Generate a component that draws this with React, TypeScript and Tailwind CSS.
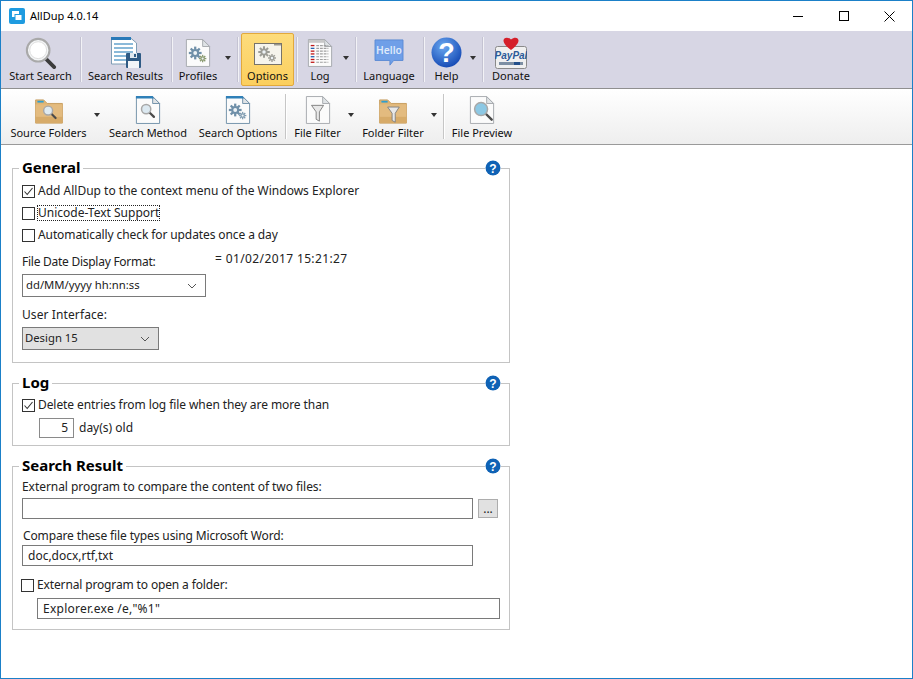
import React from "react";

const FONT = "[font-family:'Noto_Sans','DejaVu_Sans',sans-serif]";
const TXT = "text-[#222]";

function Gear({ cx, cy, r, c = "#6f8fa8" }: { cx: number; cy: number; r: number; c?: string }) {
  const teeth = Array.from({ length: 8 }, (_, i) => i * 45);
  return (
    <g>
      {teeth.map((a) => (
        <rect key={a} x={cx - r * 0.22} y={cy - r * 1.25} width={r * 0.44} height={r * 0.6} fill={c} transform={`rotate(${a} ${cx} ${cy})`} />
      ))}
      <circle cx={cx} cy={cy} r={r * 0.78} fill={c} />
      <circle cx={cx} cy={cy} r={r * 0.38} fill="#eef3f6" />
    </g>
  );
}

function Doc({ children, top }: { children?: React.ReactNode; top?: boolean }) {
  const stroke = top ? "#6d8ea6" : "#a4a8ac";
  return (
    <svg width="26" height="30" viewBox="0 0 28 32">
      <path d="M1.5 1.5H19L26.5 9V30.5H1.5Z" fill="#fbfbfb" stroke={stroke} />
      <path d="M19 1.5V9H26.5Z" fill="#dfe3e6" stroke={stroke} />
      {top && <path d="M1 1H19L20.5 3.5H1Z" fill="#2f80b8" />}
      {children}
    </svg>
  );
}

function Magnifier({ cx = 12, cy = 12, r = 6, lens = "#dfeaf0", hx = 9, sw = 2.4 }: { cx?: number; cy?: number; r?: number; lens?: string; hx?: number; sw?: number }) {
  const d = r * 0.72;
  return (
    <g>
      <line x1={cx + d} y1={cy + d} x2={cx + d + hx * 0.8} y2={cy + d + hx * 0.8} stroke="#4a4a4a" strokeWidth={sw} strokeLinecap="round" />
      <circle cx={cx} cy={cy} r={r} fill={lens} stroke="#a8a8a8" strokeWidth="1.6" />
    </g>
  );
}

function Funnel({ x = 0, y = 0 }: { x?: number; y?: number }) {
  return (
    <g transform={`translate(${x} ${y})`}>
      <path d="M0 0H13L8.5 7V17L5 15V7Z" fill="#e8e8e8" stroke="#7d7d7d" />
    </g>
  );
}

function Folder({ children }: { children?: React.ReactNode }) {
  return (
    <svg width="30" height="25" viewBox="0 0 32 28" className="mt-[4px]">
      <path d="M1 1H10L14 5H31V27H1Z" fill="#dfb473" stroke="#c59a5a" />
      <path d="M1 6H31V27H1Z" fill="#e3bb7f" />
      <path d="M1 20H31V27H1Z" fill="#d2a45f" opacity="0.7" />
      <rect x="3" y="2" width="7" height="2" fill="#2f9fd0" />
      {children}
    </svg>
  );
}

const I = {
  search: (
    <svg width="32" height="32" viewBox="0 0 34 34">
      <line x1="21" y1="22" x2="31" y2="32" stroke="#3c3c3c" strokeWidth="4" strokeLinecap="round" />
      <circle cx="14" cy="14" r="12" fill="#f4f6f7" stroke="#a9a9a9" strokeWidth="2.2" />
      <circle cx="14" cy="14" r="9" fill="#fff" stroke="#dcdcdc" />
    </svg>
  ),
  results: (
    <svg width="30" height="31" viewBox="0 0 30 31">
      <path d="M.5 .5H19L25.5 6V27H.5Z" fill="#fff" stroke="#7f9db5" />
      <rect x="0" y="0" width="20" height="3" fill="#2a7ab8" />
      {[7, 11, 15, 19, 23].map((y) => (
        <line key={y} x1="3" x2="22" y1={y} y2={y} stroke="#3b8ac0" strokeWidth="1.2" />
      ))}
      <rect x="15" y="16" width="15" height="15" rx="1" fill="#2f5b85" />
      <rect x="19" y="16" width="7" height="5" fill="#dfe8ef" />
      <rect x="23" y="17" width="2" height="3" fill="#2f5b85" />
      <rect x="17" y="24" width="11" height="7" fill="#f2f5f8" />
    </svg>
  ),
  profiles: (
    <Doc>
      <Gear cx={11} cy={16} r={5.5} />
      <Gear cx={19} cy={22} r={3.2} c="#8a9a70" />
    </Doc>
  ),
  options: (
    <svg width="28" height="22" viewBox="0 0 28 22">
      <rect x=".5" y=".5" width="27" height="21" fill="#f6f4ec" stroke="#77736a" />
      <rect x="20" y="1" width="7" height="1.5" fill="#9a988f" />
      <Gear cx={10} cy={9} r={4.6} c="#9d9d96" />
      <Gear cx={18} cy={15} r={3.2} c="#9d9d96" />
    </svg>
  ),
  log: (
    <Doc>
      <rect x="2" y="2" width="17" height="3" fill="#c8c8c8" />
      {[8, 11, 14, 17, 20, 23, 26].map((y, i) => (
        <g key={y}>
          <line x1="4" x2="8" y1={y} y2={y} stroke={i % 3 === 1 ? "#2464b0" : "#c01818"} strokeWidth="1.4" />
          <line x1="10" x2="23" y1={y} y2={y} stroke="#a0a0a0" strokeWidth="1.2" strokeDasharray="3 1" />
        </g>
      ))}
    </Doc>
  ),
  language: (
    <svg width="32" height="28" viewBox="0 0 32 30">
      <path d="M1 1H31V23H21L17 28V23H1Z" fill="#6f9fe8" stroke="#5a8ad4" />
      <text x="16" y="16" textAnchor="middle" fontSize="11" fontWeight="600" fill="#dfeafa" fontFamily="'Noto Sans',sans-serif">Hello</text>
    </svg>
  ),
  help: (
    <svg width="31" height="31" viewBox="0 0 31 31">
      <defs>
        <radialGradient id="hb" cx="0.4" cy="0.3" r="0.8">
          <stop offset="0" stopColor="#6aa8f0" />
          <stop offset="1" stopColor="#0c3fae" />
        </radialGradient>
      </defs>
      <circle cx="15.5" cy="15.5" r="15" fill="url(#hb)" />
      <text x="15.5" y="25" textAnchor="middle" fontSize="27" fontWeight="700" fill="#fff" fontFamily="'Liberation Sans',sans-serif">?</text>
    </svg>
  ),
  paypal: (
    <svg width="32" height="32" viewBox="0 0 32 32">
      <rect x=".5" y="9.5" width="31" height="22" rx="2" fill="#f0f0f0" stroke="#8a8a8a" />
      <path d="M16 13C10 8.5 8.5 5.5 8.5 3.5 8.5 .5 12.5-.5 16 2.5 19.5-.5 23.5 .5 23.5 3.5 23.5 5.5 22 8.5 16 13Z" fill="#d51f2a" />
      <text x="16" y="22" textAnchor="middle" fontSize="10" fontStyle="italic" fontWeight="700" fill="#2a5a98" fontFamily="'Liberation Sans',sans-serif">PayPal</text>
      <rect x="4" y="25" width="24" height="3" fill="#7d8fa3" />
      <rect x="19" y="25" width="6" height="3" fill="#24508a" />
    </svg>
  ),
  sourceFolders: (
    <Folder>
      <Magnifier cx={15} cy={13} r={5} hx={6} />
    </Folder>
  ),
  searchMethod: (
    <Doc top>
      <Magnifier cx={12} cy={15} r={5} hx={6} lens="#dce9f1" />
    </Doc>
  ),
  searchOptions: (
    <Doc top>
      <Gear cx={11} cy={16} r={5.5} />
      <Gear cx={19} cy={22} r={3.2} c="#7f9bb0" />
    </Doc>
  ),
  fileFilter: (
    <Doc>
      <Funnel x={7} y={11} />
    </Doc>
  ),
  folderFilter: (
    <Folder>
      <Funnel x={10} y={9} />
    </Folder>
  ),
  filePreview: (
    <Doc>
      <Magnifier cx={13} cy={15} r={7} hx={8} lens="#8cc8e4" sw={2.6} />
    </Doc>
  ),
};

function Tool({ className, icon, label }: { className: string; icon: React.ReactNode; label: string }) {
  return (
    <div className={`flex shrink-0 flex-col items-center ${className}`}>
      <div className="flex h-[34px] items-center justify-center pt-[5px]">{icon}</div>
      <span className="mt-[1px] whitespace-nowrap text-[11px] leading-[16px] text-[#111]">{label}</span>
    </div>
  );
}

function Arrow({ className }: { className: string }) {
  return (
    <div className={`flex h-[50px] shrink-0 items-center ${className}`}>
      <div className="h-0 w-0 border-x-[3.5px] border-t-[4px] border-x-transparent border-t-[#333]" />
    </div>
  );
}

function Sep({ light }: { light?: boolean }) {
  return <div className={`mt-[4px] h-[45px] w-[2px] shrink-0 border-l ${light ? "border-[#c4c3d2] bg-[#f2f2f6]" : "border-[#c6c6c6] bg-white"}`} />;
}

function Check({ on }: { on?: boolean }) {
  return (
    <span className="flex h-[13px] w-[13px] shrink-0 items-center justify-center border border-[#333] bg-white">
      {on && (
        <svg width="11" height="11" viewBox="0 0 11 11">
          <path d="M1.5 5.5L4.2 8.5L9.5 2" fill="none" stroke="#333" strokeWidth="1.1" />
        </svg>
      )}
    </span>
  );
}

function HelpDot() {
  return (
    <svg width="16" height="16" viewBox="0 0 16 16" className="absolute right-[8px] top-[-9px] rounded-full bg-white">
      <circle cx="8" cy="8" r="7.5" fill="#0f62b5" />
      <text x="8" y="12.5" textAnchor="middle" fontSize="12" fontWeight="700" fill="#fff" fontFamily="'Liberation Sans',sans-serif">?</text>
    </svg>
  );
}

function Group({ title, className, children }: { title: string; className: string; children: React.ReactNode }) {
  return (
    <div className={`relative w-[498px] border border-[#c4c4c4] px-[9px] ${className}`}>
      <span className="absolute left-[6px] top-[-11px] bg-white px-[3px] text-[15px] font-bold leading-[19px] text-black">{title}</span>
      <HelpDot />
      {children}
    </div>
  );
}

function Row({ on, label, className, tr = "", focus }: { on?: boolean; label: string; className: string; tr?: string; focus?: boolean }) {
  return (
    <div className={`flex h-[16px] items-center gap-[3px] ${className}`}>
      <Check on={on} />
      <span className={`whitespace-nowrap text-xs leading-[14px] ${TXT} ${tr} ${focus ? "outline-1 outline-dotted outline-[#222]" : ""}`}>{label}</span>
    </div>
  );
}

function Select({ className, value }: { className: string; value: string }) {
  return (
    <div className={`flex h-[23px] items-center justify-between border border-[#7a7a7a] pr-[8px] text-[11.3px] ${TXT} ${className}`}>
      <span>{value}</span>
      <svg width="10" height="6" viewBox="0 0 10 6">
        <path d="M1 1L5 5L9 1" fill="none" stroke="#555" />
      </svg>
    </div>
  );
}

function Input({ className, value, tr = "" }: { className: string; value?: string; tr?: string }) {
  return (
    <div className={`flex h-[21px] shrink-0 items-center border border-[#7a7a7a] bg-white pl-[5px] text-xs ${TXT} ${tr} ${className}`}>
      {value}
    </div>
  );
}

function Label({ children, className }: { children: React.ReactNode; className: string }) {
  return <div className={`h-[16px] whitespace-nowrap text-xs leading-[16px] ${TXT} ${className}`}>{children}</div>;
}

export default function App() {
  return (
    <div className={`flex h-[679px] w-[913px] flex-col overflow-hidden border border-[#1b80c8] bg-white ${FONT}`}>
      <div className="flex h-[30px] shrink-0 items-center bg-white">
        <svg width="16" height="16" viewBox="0 0 16 16" className="ml-[8px]">
          <rect width="16" height="16" rx="2" fill="#1e9be0" />
          <rect x="3" y="3" width="7" height="6" fill="#fff" />
          <rect x="6" y="6.5" width="7" height="6" fill="#fff" stroke="#1e9be0" />
        </svg>
        <span className="ml-[5px] text-[11px] text-black">AllDup 4.0.14</span>
        <div className="ml-auto flex h-full items-center">
          <div className="flex h-full w-[46px] items-center justify-center">
            <div className="h-px w-[10px] bg-black" />
          </div>
          <div className="flex h-full w-[46px] items-center justify-center">
            <div className="h-[10px] w-[10px] border border-black" />
          </div>
          <div className="flex h-full w-[45px] items-center justify-center">
            <svg width="11" height="11" viewBox="0 0 11 11">
              <path d="M.5 .5L10.5 10.5M10.5 .5L.5 10.5" stroke="#000" />
            </svg>
          </div>
        </div>
      </div>

      <div className="flex h-[58px] shrink-0 items-start border-b border-[#8f8f8f] bg-[#d7d6e4] pt-[2px]">
        <Tool className="w-[79px]" icon={I.search} label="Start Search" />
        <Sep light />
        <Tool className="w-[89px] pr-[2px]" icon={I.results} label="Search Results" />
        <Sep light />
        <Tool className="w-[50px]" icon={I.profiles} label="Profiles" />
        <Arrow className="w-[14px] pl-[2px]" />
        <Sep light />
        <div className="flex w-[57px] shrink-0 justify-center">
          <div className="flex h-[53px] w-[53px] flex-col items-center rounded-[2px] border border-[#e2a93b] bg-gradient-to-b from-[#fddc7c] to-[#fbcf5e]">
            <div className="flex h-[33px] items-center justify-center pt-[7px]">{I.options}</div>
            <span className="mt-[1px] whitespace-nowrap text-[11px] leading-[16px] text-[#111]">Options</span>
          </div>
        </div>
        <Sep light />
        <Tool className="w-[44px]" icon={I.log} label="Log" />
        <Arrow className="w-[13px] pl-[1px]" />
        <Sep light />
        <Tool className="w-[66px] pr-[2px]" icon={I.language} label="Language" />
        <Sep light />
        <Tool className="w-[43px]" icon={I.help} label="Help" />
        <Arrow className="w-[14px] pl-[2px]" />
        <Sep light />
        <Tool className="w-[54px]" icon={I.paypal} label="Donate" />
      </div>

      <div className="flex h-[56px] shrink-0 items-start border-b border-[#9a9a9a] bg-gradient-to-b from-white to-[#eeeeee] pt-[1px]">
        <Tool className="ml-[9px] w-[77px]" icon={I.sourceFolders} label="Source Folders" />
        <Arrow className="w-[17px] pl-[7px]" />
        <Tool className="w-[88px]" icon={I.searchMethod} label="Search Method" />
        <Tool className="w-[93px] pr-[1px]" icon={I.searchOptions} label="Search Options" />
        <Sep />
        <Tool className="w-[61px]" icon={I.fileFilter} label="File Filter" />
        <Arrow className="w-[7px]" />
        <Tool className="w-[76px]" icon={I.folderFilter} label="Folder Filter" />
        <Arrow className="w-[12px]" />
        <Sep />
        <Tool className="w-[74px]" icon={I.filePreview} label="File Preview" />
      </div>

      <div className="flex flex-col pl-[11px] pt-[23px]">
        <Group title="General" className="h-[195px]">
          <Row on label="Add AllDup to the context menu of the Windows Explorer" className="mt-[14px]" />
          <Row label="Unicode-Text Support" className="mt-[6px]" focus />
          <Row label="Automatically check for updates once a day" className="mt-[6px]" tr="tracking-[-0.1px]" />
          <div className="relative">
            <Label className="mt-[11px] tracking-[-0.26px]">File Date Display Format:</Label>
            <span className={`absolute left-[193px] top-[-3px] whitespace-nowrap text-xs tracking-[0.38px] ${TXT}`}>= 01/02/2017 15:21:27</span>
          </div>
          <div className="mt-[4px]">
            <Select className="w-[184px] bg-white pl-[3px]" value="dd/MM/yyyy hh:nn:ss" />
          </div>
          <Label className="mt-[10px] tracking-[0.1px]">User Interface:</Label>
          <div className="mt-[4px]">
            <Select className="w-[137px] bg-[#e1e1e1] pl-[2px]" value="Design 15" />
          </div>
        </Group>

        <Group title="Log" className="mt-[20px] h-[63px]">
          <Row on label="Delete entries from log file when they are more than" className="mt-[13px]" tr="tracking-[-0.08px]" />
          <div className="mt-[5px] flex items-center gap-[5px] pl-[17px]">
            <div className={`flex h-[20px] w-[35px] items-center justify-end border border-[#8a8a8a] pr-[5px] text-xs ${TXT}`}>5</div>
            <span className={`text-xs ${TXT}`}>day(s) old</span>
          </div>
        </Group>

        <Group title="Search Result" className="mt-[20px] h-[164px]">
          <Label className="mt-[12px] tracking-[-0.05px]">External program to compare the content of two files:</Label>
          <div className="mt-[3px] flex items-center">
            <Input className="w-[451px]" />
            <div className="ml-[5px] flex h-[19px] w-[20px] items-center justify-center border border-[#adadad] bg-[#e1e1e1] text-xs leading-[14px] text-[#222]">...</div>
          </div>
          <Label className="ml-[1px] mt-[9px] tracking-[-0.13px]">Compare these file types using Microsoft Word:</Label>
          <div className="mt-[1px]">
            <Input className="w-[451px]" value="doc,docx,rtf,txt" />
          </div>
          <div className="-ml-[1px] mt-[11px] flex h-[16px] items-center gap-[3px]">
            <Check />
            <span className={`whitespace-nowrap text-xs tracking-[-0.14px] ${TXT}`}>External program to open a folder:</span>
          </div>
          <div className="mt-[5px]">
            <Input className="ml-[15px] w-[463px]" value={'Explorer.exe /e,"%1"'} tr="tracking-[0.25px]" />
          </div>
        </Group>
      </div>
    </div>
  );
}
